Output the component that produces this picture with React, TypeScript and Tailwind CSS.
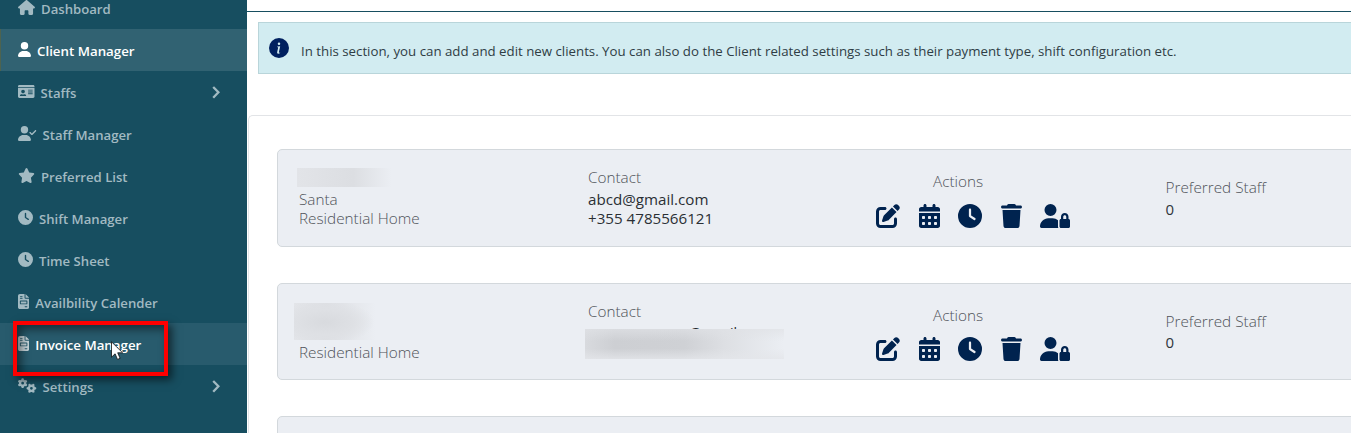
import type { ComponentType, ReactNode } from 'react';
import {
  FaHouse, FaUser, FaUserCheck, FaStar, FaClock, FaFileInvoice, FaGears,
  FaCalendarDays, FaTrash, FaUserLock,
} from 'react-icons/fa6';
import { FaIdCard } from 'react-icons/fa';
import { BsInfoCircleFill } from 'react-icons/bs';

type Icon = ComponentType<{ className?: string }>;

interface NavItem {
  label: string;
  icon: Icon;
  width: string;
  state?: 'active' | 'hover';
  expandable?: boolean;
}

const nav: NavItem[] = [
  { label: 'Dashboard', icon: FaHouse, width: 'w-[17px]' },
  { label: 'Client Manager', icon: FaUser, width: 'w-[13px]', state: 'active' },
  { label: 'Staffs', icon: FaIdCard, width: 'w-[16.5px]', expandable: true },
  { label: 'Staff Manager', icon: FaUserCheck, width: 'w-[18.5px]' },
  { label: 'Preferred List', icon: FaStar, width: 'w-[17px]' },
  { label: 'Shift Manager', icon: FaClock, width: 'w-[15px]' },
  { label: 'Time Sheet', icon: FaClock, width: 'w-[15px]' },
  { label: 'Availbility Calender', icon: FaFileInvoice, width: 'w-[11.25px]' },
  { label: 'Invoice Manager', icon: FaFileInvoice, width: 'w-[11.25px]', state: 'hover' },
  { label: 'Settings', icon: FaGears, width: 'w-[18.5px]', expandable: true },
];

function Chevron() {
  return (
    <svg className="mr-px ml-auto h-[13px] w-[8px]" viewBox="0 0 8 13" fill="none" stroke="currentColor" strokeWidth="2.3">
      <path d="M1.2 1 6.4 6.3 1.2 11.8" />
    </svg>
  );
}

function EditIcon() {
  return (
    <svg className="size-6" viewBox="0 0 512 512" fill="currentColor">
      <path d="M471.6 21.7c-21.9-21.9-57.3-21.9-79.2 0L362.3 51.7l97.9 97.9 30.1-30.1c21.9-21.9 21.9-57.3 0-79.2L471.6 21.7zm-299.2 220c-6.1 6.1-10.8 13.6-13.5 21.9l-29.6 88.8c-2.9 8.6-.6 18.1 5.8 24.6s15.9 8.7 24.6 5.8l88.8-29.6c8.2-2.7 15.7-7.4 21.9-13.5L437.7 172.3 339.7 74.3 172.4 241.7zM96 64C43 64 0 107 0 160V416c0 53 43 96 96 96H352c53 0 96-43 96-96V320c0-17.7-14.3-32-32-32s-32 14.3-32 32v96c0 17.7-14.3 32-32 32H96c-17.7 0-32-14.3-32-32V160c0-17.7 14.3-32 32-32h96c17.7 0 32-14.3 32-32s-14.3-32-32-32H96z" />
    </svg>
  );
}

function NavRow({ item }: { item: NavItem }) {
  const Glyph = item.icon;
  const tone =
    item.state === 'active'
      ? 'bg-[#316272] text-white border-l border-[#4d6350] pl-[17px]'
      : item.state === 'hover'
        ? 'bg-[#285b6d] text-white pl-[18px]'
        : 'text-[#a2bac2] pl-[18px]';
  return (
    <li className={`flex h-[42px] shrink-0 items-center pr-[26px] ${tone}`}>
      <Glyph className={`-mt-[2px] h-[15px] shrink-0 ${item.width} ${item.state === 'hover' ? 'text-[#c3d1d6]' : ''}`} />
      <span className={`mt-[2px] ml-[6px] leading-5 font-semibold whitespace-nowrap ${item.state ? 'text-[13.3px]' : 'text-[13.15px]'}`}>
        {item.label}
      </span>
      {item.expandable && <Chevron />}
    </li>
  );
}

function Actions() {
  return (
    <div className="mt-[12.5px] flex h-6 items-center text-[#00234f]">
      <EditIcon />
      <FaCalendarDays className="ml-[19px] h-6 w-[21px]" />
      <FaClock className="ml-[18px] size-6" />
      <FaTrash className="ml-[19px] h-6 w-[21px]" />
      <FaUserLock className="ml-[18px] h-6 w-[30px]" />
    </div>
  );
}

function CardShell({ children }: { children?: ReactNode }) {
  return (
    <section className="flex h-[97.5px] w-[1100px] shrink-0 rounded-[5px] border border-[#d3d8dc] bg-[#ebeef3] text-[15.3px] leading-[19px] font-light text-[#4f5359]">
      {children}
    </section>
  );
}

function ClientCard({ name, contact }: { name: ReactNode; contact: ReactNode }) {
  return (
    <CardShell>
      <div className="w-[310px] shrink-0 pl-[21px]">{name}</div>
      <div className="w-[288px] shrink-0 pt-[18px]">
        <div>Contact</div>
        {contact}
      </div>
      <div className="w-[289.5px] shrink-0 pt-[22px]">
        <div className="pl-[57px]">Actions</div>
        <Actions />
      </div>
      <div className="shrink-0 pt-[28px]">
        <div>Preferred Staff</div>
        <div className="mt-[2.6px] text-[15px] font-normal text-[#30353a]">0</div>
      </div>
    </CardShell>
  );
}

export default function App() {
  return (
    <div className="relative flex h-[433px] w-[1351px] overflow-hidden bg-white font-['Open_Sans','Noto_Sans',sans-serif]">
      <aside className="w-[247px] shrink-0 bg-[#174e60]">
        <ul className="-mt-[13px] flex flex-col">
          {nav.map((item) => (
            <NavRow key={item.label} item={item} />
          ))}
        </ul>
      </aside>

      <main className="flex min-w-0 flex-1 flex-col overflow-hidden">
        <div className="h-[12px] shrink-0 border-b border-[#174e60]" />
        <div className="mt-[10px] ml-[11px] flex h-[52px] w-[1120px] shrink-0 items-center border border-[#b9d5da] bg-[#d2ecf1] pl-[10px]">
          <BsInfoCircleFill className="-mt-px size-5 shrink-0 text-[#00205f]" />
          <p className="mt-[6px] ml-[12px] text-[13.27px] leading-5 whitespace-nowrap text-[#2f3d45]">
            In this section, you can add and edit new clients. You can also do the Client related settings such as their payment type, shift configuration etc.
          </p>
        </div>

        <div className="mt-[41px] ml-[1px] flex w-[1160px] shrink-0 flex-col gap-[36px] rounded-tl-[5px] border-t border-l border-[#e2e4e7] pt-[33px] pl-[28px]">
          <ClientCard
            name={
              <>
                <div className="mt-[18px] -ml-[2px] h-[19px] w-[94px] bg-linear-to-r from-[#e2e4e8] via-[#dcdee2] via-60% to-[#ebeef3]" />
                <div className="mt-[3px]">Santa</div>
                <div>Residential Home</div>
              </>
            }
            contact={
              <div className="mt-[3px] text-[15.15px] font-normal text-[#2a2f34]">
                <div>abcd@gmail.com</div>
                <div>+355 4785566121</div>
              </div>
            }
          />
          <ClientCard
            name={
              <>
                <div className="mt-[19px] -ml-[5px] h-[37px] w-[82px] bg-[radial-gradient(ellipse_60%_60%_at_38%_52%,#d8dade_0%,#dee0e4_55%,transparent_100%),linear-gradient(to_right,#e3e5e9,#dddfe3_40%,#ebeef3)]" />
                <div className="mt-[3px]">Residential Home</div>
              </>
            }
            contact={
              <div className="relative mt-[2px] h-[38px] pl-[101px] text-[14px] font-normal text-[#212529]">
                <span>@gmail</span>
                <div className="absolute top-[6px] -left-[3px] h-[30px] w-[199px] bg-[linear-gradient(to_bottom,#e0e2e6b0,transparent_40%,transparent_65%,#e4e6eacc),linear-gradient(to_right,#d8dade,#cdcfd3_15%,#cfd1d5_50%,#dddfe3_70%,#ebeef3)]" />
              </div>
            }
          />
          <CardShell />
        </div>
      </main>

      <div className="absolute top-[321px] left-[13px] h-[55px] w-[155px] border-4 border-[#fe0000] shadow-[4px_4px_8px_rgba(0,0,0,0.55),inset_4px_4px_10px_rgba(0,0,0,0.5)]" />
      <svg className="absolute top-[341px] left-[111px] h-[19px] w-[12px]" viewBox="0 0 12 19">
        <path d="M.5 .8v15.4l3.6-3.4 2.4 5.6 2.6-1.1-2.4-5.5h4.9z" fill="#fff" stroke="#111" strokeWidth=".8" />
      </svg>
    </div>
  );
}
